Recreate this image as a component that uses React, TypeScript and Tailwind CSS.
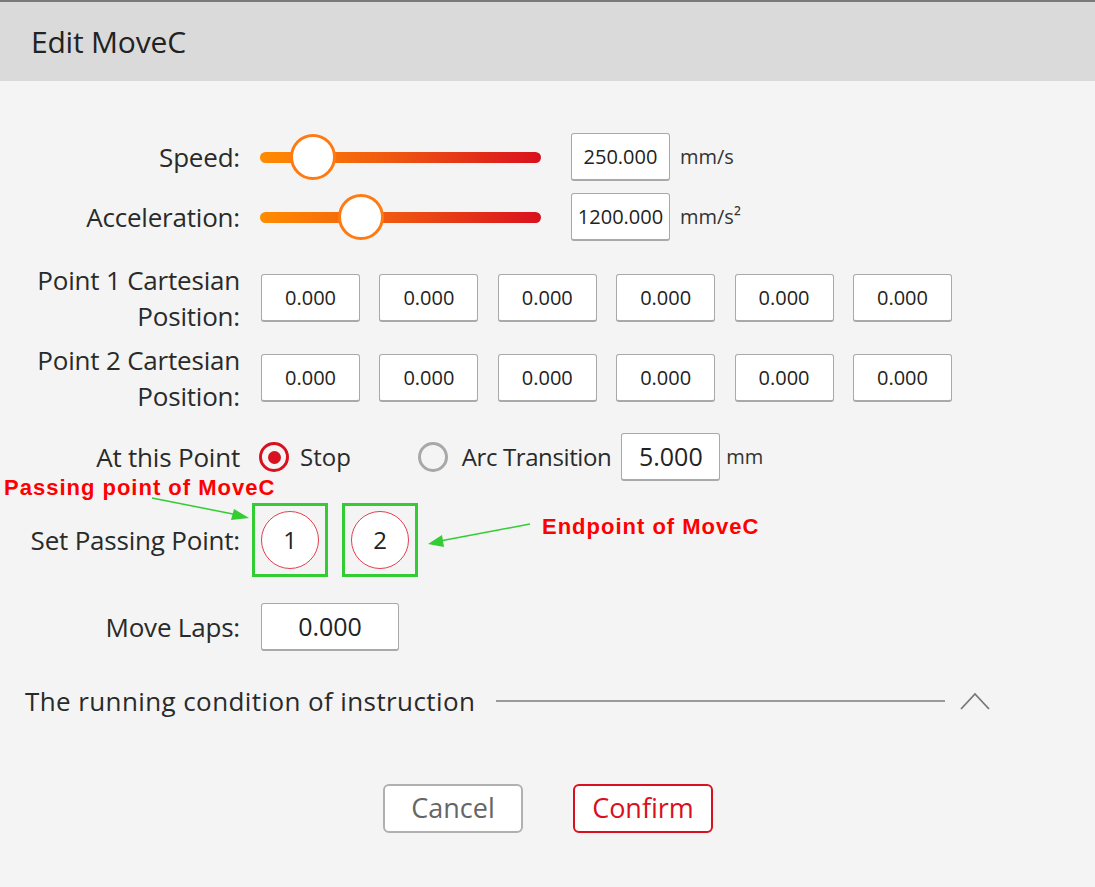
import React from "react";

const FONT = { fontFamily: '"Open Sans", "Noto Sans", sans-serif' };
const ANNO = { fontFamily: '"Liberation Sans", Arial, sans-serif' };

function Slider({ knob }: { knob: number }) {
  return (
    <div className="relative h-[48px] w-[281px] flex items-center">
      <div className="h-[11px] w-full rounded-full bg-[linear-gradient(to_right,#ff8c00,#f05a10_45%,#d9101e)]" />
      <div
        className="absolute top-[1px] h-[46px] w-[46px] -translate-x-1/2 rounded-full border-[3px] border-[#ff7a12] bg-white"
        style={{ left: knob }}
      />
    </div>
  );
}

function Box({
  value,
  w = "w-[99px]",
  text = "text-[20px]",
}: {
  value: string;
  w?: string;
  text?: string;
}) {
  return (
    <div
      className={`${w} h-[48px] flex items-center justify-center rounded-[3px] border border-[#a9a9a9] border-b-2 bg-white text-[#222] ${text}`}
    >
      {value}
    </div>
  );
}

function Label({ children, tall }: { children: React.ReactNode; tall?: boolean }) {
  return (
    <div
      className={`w-[240px] shrink-0 text-right text-[26px] tracking-[-0.2px] text-[#2a2a2a] ${
        tall ? "leading-[36px]" : "leading-[32px]"
      }`}
    >
      {children}
    </div>
  );
}

function Radio({ on }: { on: boolean }) {
  return (
    <div
      className={`h-[30px] w-[30px] rounded-full border-[3px] flex items-center justify-center ${
        on ? "border-[#d9101e]" : "border-[#a8a8a8]"
      }`}
    >
      {on && <div className="h-[13px] w-[13px] rounded-full bg-[#d9101e]" />}
    </div>
  );
}

function PointCircle({ n }: { n: string }) {
  return (
    <div className="border-[3px] border-[#33cc33] w-[76px] h-[74px] flex items-center justify-center">
      <div className="h-[58px] w-[58px] rounded-full border border-[#e04050] bg-white flex items-center justify-center text-[24px] text-[#222]">
        {n}
      </div>
    </div>
  );
}

export default function App() {
  const zeros = ["0.000", "0.000", "0.000", "0.000", "0.000", "0.000"];
  return (
    <div className="relative w-[1095px] h-[887px] bg-[#f4f4f4] overflow-hidden" style={FONT}>
      {/* Header */}
      <div className="h-[81px] border-t-2 border-[#7a7a7a] bg-[#dadada] flex items-center pl-[31px]">
        <h1 className="text-[30px] text-[#222] tracking-[-0.2px]">Edit MoveC</h1>
      </div>

      <div className="flex flex-col">
        {/* Speed */}
        <div className="mt-[52px] flex items-center h-[48px]">
          <Label>Speed:</Label>
          <div className="ml-[20px]">
            <Slider knob={53} />
          </div>
          <div className="ml-[30px]">
            <Box value="250.000" />
          </div>
          <span className="ml-[10px] text-[20px] text-[#333]">mm/s</span>
        </div>

        {/* Acceleration */}
        <div className="mt-[12px] flex items-center h-[48px]">
          <Label>Acceleration:</Label>
          <div className="ml-[20px]">
            <Slider knob={101} />
          </div>
          <div className="ml-[30px]">
            <Box value="1200.000" />
          </div>
          <span className="ml-[10px] text-[20px] text-[#333]">mm/s²</span>
        </div>

        {/* Point 1 */}
        <div className="mt-[25px] flex items-center h-[64px]">
          <Label tall>
            Point 1 Cartesian
            <br />
            Position:
          </Label>
          <div className="ml-[21px] flex gap-[19.4px]">
            {zeros.map((z, i) => (
              <Box key={i} value={z} />
            ))}
          </div>
        </div>

        {/* Point 2 */}
        <div className="mt-[16px] flex items-center h-[64px]">
          <Label tall>
            Point 2 Cartesian
            <br />
            Position:
          </Label>
          <div className="ml-[21px] flex gap-[19.4px]">
            {zeros.map((z, i) => (
              <Box key={i} value={z} />
            ))}
          </div>
        </div>

        {/* At this point */}
        <div className="mt-[22px] flex items-center h-[50px]">
          <Label>At this Point</Label>
          <div className="ml-[19px]">
            <Radio on />
          </div>
          <span className="ml-[11px] text-[24px] text-[#2a2a2a]">Stop</span>
          <div className="ml-[67px]">
            <Radio on={false} />
          </div>
          <span className="ml-[14px] text-[24px] tracking-[-0.4px] text-[#2a2a2a]">Arc Transition</span>
          <div className="ml-[10px]">
            <Box value="5.000" text="text-[25px]" />
          </div>
          <span className="ml-[6px] text-[20px] text-[#333]">mm</span>
        </div>

        {/* Set passing point */}
        <div className="mt-[21px] flex items-center h-[74px]">
          <Label>Set Passing Point:</Label>
          <div className="ml-[12px] flex gap-[14px]">
            <PointCircle n="1" />
            <PointCircle n="2" />
          </div>
        </div>

        {/* Move Laps */}
        <div className="mt-[26px] flex items-center h-[48px]">
          <Label>Move Laps:</Label>
          <div className="ml-[21px]">
            <Box value="0.000" w="w-[138px]" text="text-[25px]" />
          </div>
        </div>

        {/* Running condition */}
        <div className="mt-[30px] flex items-center h-[40px] pl-[25px]">
          <span className="text-[26px] tracking-[0.4px] text-[#2a2a2a]">
            The running condition of instruction
          </span>
          <div className="ml-[21px] w-[449px] h-[2px] bg-[#9a9a9a]" />
          <svg className="ml-[14px]" width="32" height="20" viewBox="0 0 32 20">
            <path d="M2 18 L16 3 L30 18" fill="none" stroke="#777" strokeWidth="1.8" />
          </svg>
        </div>

        {/* Buttons */}
        <div className="mt-[63px] flex justify-center gap-[50px] pl-[1px]">
          <button className="w-[140px] h-[49px] rounded-[6px] border-2 border-[#b0b0b0] bg-white text-[27px] text-[#666]">
            Cancel
          </button>
          <button className="w-[140px] h-[49px] rounded-[6px] border-2 border-[#d9101e] bg-white text-[27px] text-[#d9101e]">
            Confirm
          </button>
        </div>
      </div>

      {/* Annotations */}
      <div className="absolute left-[4px] top-[471px] text-[22px] font-bold text-[#ff0000] tracking-[1px]" style={ANNO}>
        Passing point of MoveC
      </div>
      <div className="absolute left-[542px] top-[510px] text-[22px] font-bold text-[#ff0000] tracking-[1px]" style={ANNO}>
        Endpoint of MoveC
      </div>
      <svg className="absolute left-0 top-0 pointer-events-none" width="1095" height="887">
        <line x1="152" y1="498" x2="238" y2="515" stroke="#33cc33" strokeWidth="1.5" />
        <polygon points="249,518 234,509 231,520" fill="#33cc33" />
        <line x1="530" y1="524" x2="440" y2="541" stroke="#33cc33" strokeWidth="1.5" />
        <polygon points="428,544 442,535 444,547" fill="#33cc33" />
      </svg>
    </div>
  );
}
